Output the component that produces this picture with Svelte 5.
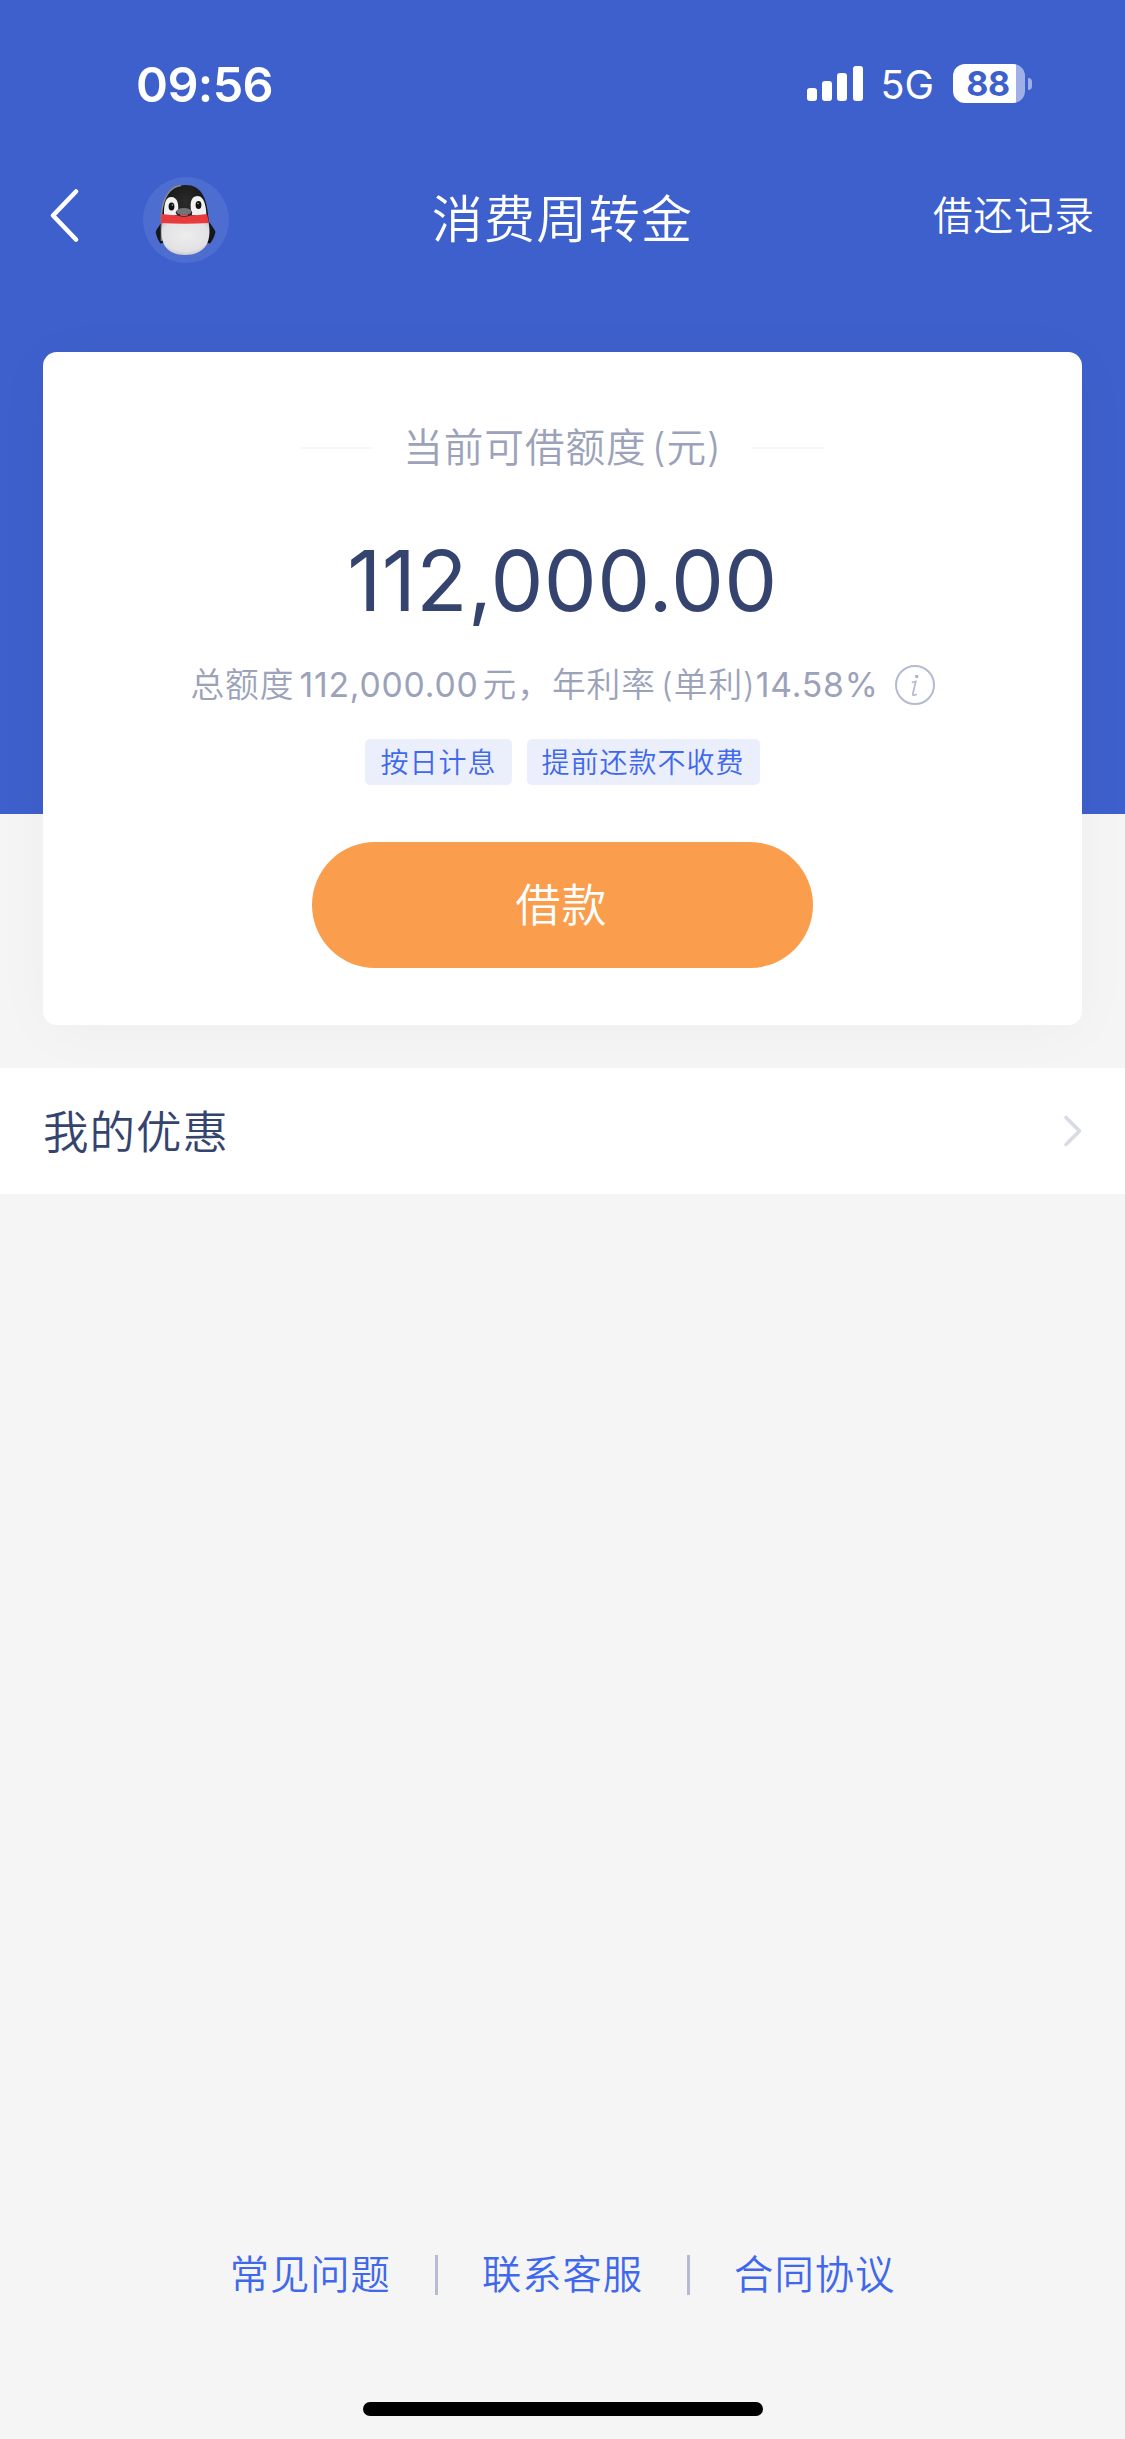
<!--
  Consumer credit home screen: status bar, navigation, available limit card,
  offers row and footer links.
-->
<script lang="ts">
  const battery = 88;
  const limit = "112,000.00";
  const rate = "14.58%";

  const signalBars = [13, 20, 28, 35];
  const tags = ["按日计息", "提前还款不收费"];
  const links = ["常见问题", "联系客服", "合同协议"];
</script>

<div class="screen">
  <header class="top">
    <div class="status">
      <span class="status__time">09:56</span>
      <div class="status__right">
        <div class="signal">
          {#each signalBars as height}
            <i style={`height:${height}px`}></i>
          {/each}
        </div>
        <span class="status__network">5G</span>
        <div class="battery">
          <div class="battery__body" style={`--level:${battery}%`}>{battery}</div>
          <div class="battery__tip"></div>
        </div>
      </div>
    </div>

    <nav class="nav">
      <div class="nav__left">
        <button class="nav__back" aria-label="返回">
          <svg width="34" height="56" viewBox="0 0 34 56" fill="none">
            <path d="M29 4.500 6 28.500l23 24" stroke="#fff" stroke-width="4.600" stroke-linecap="round" stroke-linejoin="round" />
          </svg>
        </button>
        <svg class="nav__avatar" width="86" height="86" viewBox="0 0 86 86">
          <defs>
            <radialGradient id="belly" cx=".5" cy=".4" r=".65">
              <stop offset="0" stop-color="#ededee" />
              <stop offset=".75" stop-color="#e2e2e4" />
              <stop offset="1" stop-color="#bfc0c4" />
            </radialGradient>
            <radialGradient id="head" cx=".5" cy=".3" r=".6">
              <stop offset="0" stop-color="#2b2b2c" />
              <stop offset="1" stop-color="#0d0e10" />
            </radialGradient>
          </defs>
          <circle cx="43" cy="43" r="43" fill="#4d6dd0" />
          <path d="M19 45c-3 4-5.500 7-6.300 10 .8 4.500 2.500 9 5.300 12l4-8zM66 45c3 4 5.500 7 6.500 10-1 4.500-3 9-6 12l-4-8z" fill="#15171c" />
          <path d="M18.500 42C18.500 20 27 8 42.500 8S64 20 65.500 42l1.500 24H17.500z" fill="url(#head)" />
          <path d="M18.500 64V38C19.500 20 28 9 38 8.500" fill="none" stroke="#8b8c88" stroke-width="1.500" />
          <path d="M21 40c0-8 0-20 7-20s8.500 8 6.500 18zM63.500 40c0-8-1.500-21-9-21S46.500 28 49 38z" fill="#f1f1f2" />
          <path d="M19.500 45h46c4 21-4.500 33-23.500 33S15.500 66 19.500 45z" fill="url(#belly)" />
          <path d="M18.500 37q24 3 45.500 0l2 9q-24 1.500-48 0z" fill="#e93a3d" />
          <ellipse cx="41" cy="35.500" rx="8.200" ry="4.300" fill="#242426" />
          <ellipse cx="41" cy="34.500" rx="7.500" ry="3.500" fill="#747476" />
          <path d="M37 37.600q4 1.800 8 0" fill="none" stroke="#cf5357" stroke-width="1.200" />
          <ellipse cx="28.500" cy="29.500" rx="2.900" ry="4" fill="#101113" />
          <ellipse cx="55.500" cy="28" rx="2.900" ry="4" fill="#101113" />
          <circle cx="29.300" cy="28" r=".7" fill="#ccc" />
          <circle cx="55" cy="26.500" r=".7" fill="#ccc" />
        </svg>
      </div>
      <h1 class="nav__title">消费周转金</h1>
      <a class="nav__records" href="#records">借还记录</a>
    </nav>
  </header>

  <section class="card">
    <div class="card__heading">当前可借额度<span class="paren">(元)</span></div>
    <div class="card__amount">{limit}</div>
    <div class="card__detail">
      <span>总额度<span class="num">{limit}</span>元，年利率<span class="paren">(单利)</span><span class="rate">{rate}</span></span>
      <svg width="40" height="40" viewBox="0 0 40 40" fill="none">
        <circle cx="20" cy="20" r="19" stroke="#b3bbd3" stroke-width="2" />
        <circle cx="21.700" cy="11.500" r="1.700" fill="#a9b1ca" />
        <path d="M16.800 17.500l4-1-3 12.500q-.3 1.500 1 1.200l3-.8" stroke="#b3bbd3" stroke-width="1.700" />
      </svg>
    </div>
    <div class="card__tags">
      {#each tags as tag}
        <span class="tag">{tag}</span>
      {/each}
    </div>
    <button class="card__borrow">借款</button>
  </section>

  <a class="row" href="#offers">
    <span>我的优惠</span>
    <svg width="22" height="34" viewBox="0 0 22 34" fill="none">
      <path d="M5 3.500 18.500 17 5 30.500" stroke="#d8dbe6" stroke-width="3.600" stroke-linecap="round" stroke-linejoin="round" />
    </svg>
  </a>

  <footer class="footer">
    <div class="footer__links">
      {#each links as link}
        <a href="#help">{link}</a>
      {/each}
    </div>
    <div class="footer__home"></div>
  </footer>
</div>

<style>
  :global(body) {
    background: #f5f5f5;
  }

  .screen {
    display: flex;
    flex-direction: column;
    width: 1125px;
    height: 2439px;
    background: linear-gradient(#3e60cc 814px, #f5f5f5 814px);
    color: #35446f;
    font-family: Inter, "Noto Sans CJK SC", sans-serif;
    font-weight: 350;
    letter-spacing: 1px;
    overflow: hidden;
  }

  a {
    color: inherit;
    text-decoration: none;
  }
  button {
    padding: 0;
    border: 0;
    background: none;
    color: inherit;
    font: inherit;
    letter-spacing: inherit;
  }

  .top {
    color: #fff;
  }

  .status {
    display: flex;
    align-items: center;
    justify-content: space-between;
    height: 168px;
    padding: 0 93px 0 136px;
    box-sizing: border-box;
  }
  .status__time {
    font-size: 48.500px;
    font-weight: 600;
    letter-spacing: -0.600px;
  }
  .status__right {
    display: flex;
    align-items: center;
  }
  .status__network {
    margin: 2px 19px 0 18px;
    font-size: 39.500px;
    font-weight: 400;
    letter-spacing: 0;
  }

  .signal {
    display: flex;
    align-items: flex-end;
    gap: 5.300px;
    height: 35px;
    margin-bottom: 1px;
  }
  .signal i {
    width: 10px;
    border-radius: 3px;
    background: #fff;
  }

  .battery {
    display: flex;
    align-items: center;
    gap: 3px;
    margin-bottom: 1px;
  }
  .battery__body {
    width: 72px;
    height: 39px;
    border-radius: 12px;
    background: linear-gradient(90deg, #fff var(--level), #a0b0e6 var(--level));
    color: #3e60cc;
    font-size: 34px;
    font-weight: 700;
    line-height: 39px;
    letter-spacing: -0.500px;
    text-align: center;
    text-indent: -2px;
  }
  .battery__tip {
    width: 4px;
    height: 12px;
    border-radius: 0 6px 6px 0;
    background: #a0b0e6;
  }

  .nav {
    display: grid;
    grid-template-columns: 1fr auto 1fr;
    align-items: center;
    height: 104px;
    padding: 0 30px 0 47px;
  }
  .nav__left {
    display: flex;
    align-items: center;
    gap: 62px;
  }
  .nav__back {
    display: flex;
    margin-top: -11px;
  }
  .nav__title {
    margin: 0 17px 0 0;
    font-size: 51px;
    font-weight: 350;
    line-height: 60px;
    letter-spacing: 1.300px;
  }
  .nav__records {
    justify-self: end;
    margin-top: -8px;
    font-size: 39.500px;
    line-height: 48px;
  }

  .card {
    display: flex;
    flex-direction: column;
    align-items: center;
    height: 673px;
    margin: 80px 43px 0;
    padding-top: 66px;
    border-radius: 14px;
    box-sizing: border-box;
    background: #fff;
    box-shadow: 0 6px 60px rgba(0, 0, 0, 0.03);
  }
  .card__heading {
    display: flex;
    align-items: center;
    justify-content: center;
    height: 60px;
    color: #9ba2b9;
    font-size: 39.600px;
    line-height: 62px;
  }
  .card__heading::before,
  .card__heading::after {
    content: "";
    width: 73px;
    height: 2px;
    margin: 0 29px;
    background: #f8f8fa;
  }
  .paren {
    margin-left: 5px;
  }
  .card__amount {
    height: 102px;
    margin-top: 52px;
    font-size: 84px;
    font-weight: 400;
    line-height: 102px;
    letter-spacing: 0.400px;
  }
  .card__detail {
    display: flex;
    align-items: center;
    gap: 16px;
    height: 50px;
    margin-top: 28px;
    color: #9ba2b9;
    font-size: 33.700px;
    line-height: 52px;
  }
  .num,
  .rate {
    font-weight: 400;
    letter-spacing: 0.800px;
  }
  .num {
    margin: 0 4px 0 5px;
  }

  .card__tags {
    display: flex;
    gap: 15px;
    margin-top: 29px;
  }
  .tag {
    height: 46px;
    padding: 1px 15px 0 15px;
    border-radius: 5px;
    box-sizing: border-box;
    background: #ebeffc;
    color: #4068ec;
    font-size: 28px;
    line-height: 46px;
    overflow: hidden;
  }

  .card__borrow {
    width: 501px;
    height: 126px;
    margin-top: 57px;
    padding-top: 2px;
    border-radius: 63px;
    box-sizing: border-box;
    background: #fa9d4d;
    color: #fff;
    font-size: 45px;
    line-height: 124px;
    text-indent: -2px;
  }

  .row {
    display: flex;
    align-items: center;
    justify-content: space-between;
    flex: 0 0 126px;
    margin-top: 43px;
    padding: 0 42px 0 43px;
    background: #fff;
    font-size: 45.500px;
    line-height: 60px;
  }
  .row span {
    padding-top: 4px;
  }

  .footer {
    display: flex;
    flex-direction: column;
    align-items: center;
    margin-top: auto;
    padding-bottom: 23px;
  }
  .footer__links {
    display: flex;
    color: #4068ec;
    font-size: 39.300px;
    line-height: 40px;
  }
  .footer__links a {
    height: 40px;
    padding: 0 44px;
  }
  .footer__links a + a {
    border-left: 3px solid #b5bbd2;
  }
  .footer__home {
    width: 400px;
    height: 14px;
    margin-top: 107px;
    border-radius: 7px;
    background: #000;
  }
</style>
